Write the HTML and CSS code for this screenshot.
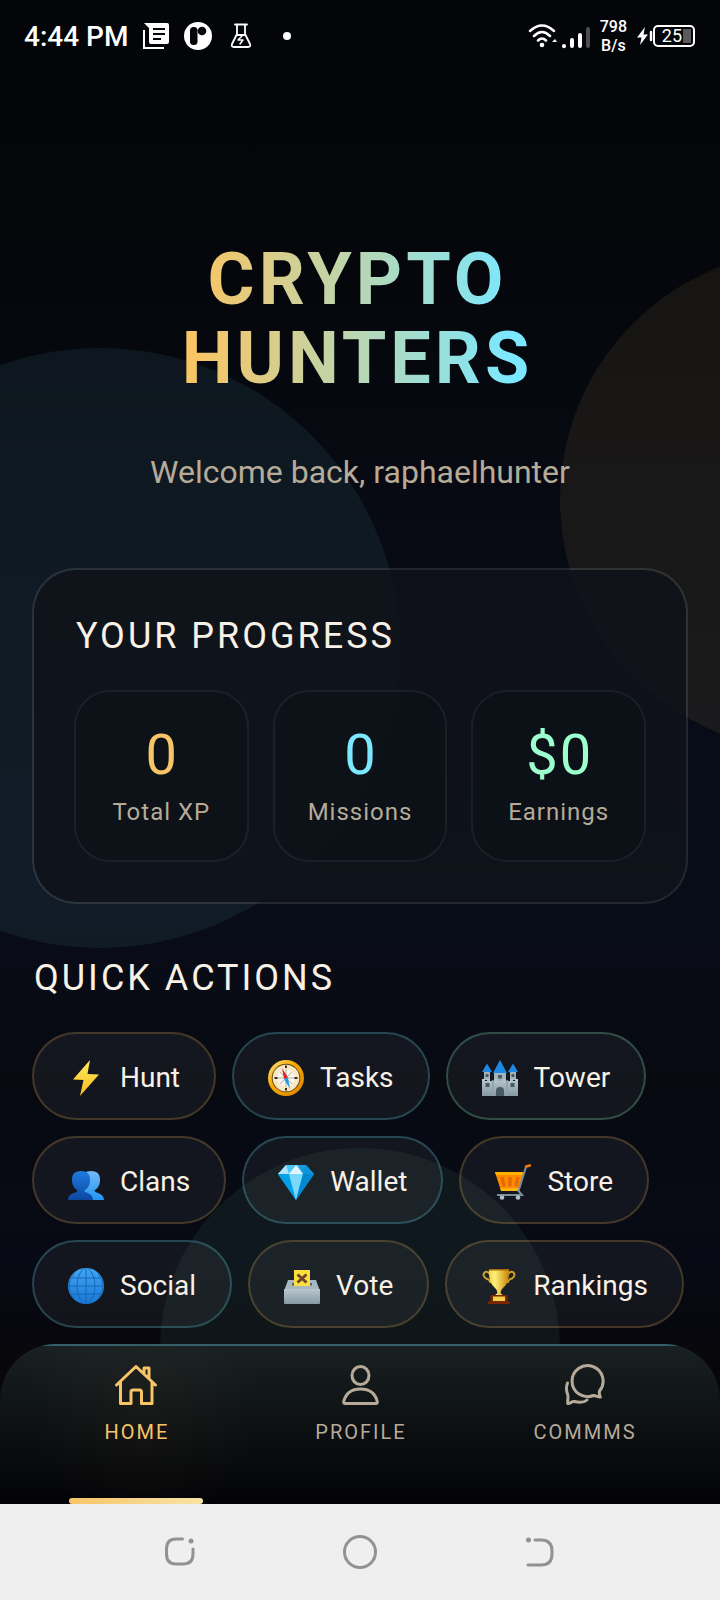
FILE: index.html
```html
<!DOCTYPE html>
<html lang="en">
<head>
<meta charset="utf-8">
<meta name="viewport" content="width=device-width, initial-scale=1">
<title>Crypto Hunters</title>
<link rel="stylesheet" href="styles.css">
</head>
<body>
<svg width="0" height="0" class="defs" aria-hidden="true">
  <defs>
    <linearGradient id="yellow" x2="0" y2="1"><stop stop-color="#ffee58"/><stop offset="1" stop-color="#f9b825"/></linearGradient>
    <linearGradient id="person" x2="0" y2="1"><stop stop-color="#1e7ce0"/><stop offset="1" stop-color="#0d47a1"/></linearGradient>
    <linearGradient id="person-back" x2="0" y2="1"><stop stop-color="#74b9f7"/><stop offset="1" stop-color="#2196f3"/></linearGradient>
    <linearGradient id="stone" x2="0" y2="1"><stop stop-color="#b9c7cf"/><stop offset="1" stop-color="#8699a3"/></linearGradient>
    <linearGradient id="globe" x2="0" y2="1"><stop stop-color="#42a5f5"/><stop offset="1" stop-color="#1976d2"/></linearGradient>
    <linearGradient id="rim" x2="1" y2="1"><stop stop-color="#ffe58a"/><stop offset=".4" stop-color="#f9ab00"/><stop offset="1" stop-color="#d98200"/></linearGradient>
    <linearGradient id="cup"><stop stop-color="#f5d04a"/><stop offset=".3" stop-color="#fff07a"/><stop offset="1" stop-color="#c98300"/></linearGradient>
  </defs>
</svg>
<div class="app">
  <div class="orb orb-blue"></div>
  <div class="orb orb-gold"></div>
  <div class="orb orb-green"></div>

  <header class="status">
    <div class="status-group status-left">
      <span class="clock">4:44 PM</span>
      <svg width="26" height="28" viewBox="0 0 26 28"><path fill="#fff" d="M1 1h23a2 2 0 0 1 2 2v17a2 2 0 0 1-2 2H8a2 2 0 0 1-2-2V6z"/><path fill="none" stroke="#fff" stroke-width="2" d="M1 8v18h20"/><path stroke="#04060a" stroke-width="2" d="M10 7h12M10 12h12M10 17h8"/></svg>
      <svg width="28" height="28" viewBox="0 0 28 28"><circle cx="14" cy="14" r="14" fill="#fff"/><rect x="6" y="5" width="7.500" height="18" rx="3.500" fill="#04060a"/><circle cx="18" cy="9" r="4.300" fill="#04060a"/></svg>
      <svg width="28" height="28" viewBox="-3 0 28 28" fill="none" stroke="#fff" stroke-width="1.800" stroke-linejoin="round" stroke-linecap="round"><path d="M5 2.500h12M7 3v9L2 22q-1 3 2 3h14q3 0 2-3l-5-10V3M7 13h8"/><path d="M12 14l-4 4h5l-3 4" stroke-width="1.500"/></svg>
      <span class="dot"></span>
    </div>
    <div class="status-group status-right">
      <svg width="62" height="28" viewBox="0 0 62 28" fill="none" stroke="#fff" stroke-width="2.500" stroke-linecap="round"><path d="M2 9q12-11 24 0M6 14q8-8 16 0M10 18.500q4-4 8 0"/><circle cx="14" cy="23" r="2.300" fill="#fff" stroke="none"/><path d="M24 20l3-3 2 3z" fill="#fff" stroke="none"/><path stroke-width="4" d="M36 24v.2M44 18v6M52 13v11"/><path stroke="#4d4d4f" stroke-width="4" d="M60 7v17"/></svg>
      <span class="speed">798<br>B/s</span>
      <span class="battery">
        <svg width="16" height="22" viewBox="0 0 16 22"><path fill="#fff" d="M8 2L0 12.500h4.500L3 20l8-10.500H6.500z"/><path stroke="#fff" stroke-width="2.500" stroke-linecap="round" d="M14 7v8"/></svg>
        <span class="battery-body">25<i class="battery-rest"></i></span>
      </span>
    </div>
  </header>

  <main class="content">
    <h1 class="title">CRYPTO<br>HUNTERS</h1>
    <p class="welcome">Welcome back, raphaelhunter</p>

    <section class="card">
      <h2 class="heading">YOUR PROGRESS</h2>
      <div class="stats">
        <div class="stat"><strong class="value gold">0</strong><span class="label">Total XP</span></div>
        <div class="stat"><strong class="value cyan">0</strong><span class="label">Missions</span></div>
        <div class="stat"><strong class="value mint">$0</strong><span class="label">Earnings</span></div>
      </div>
    </section>

    <section class="quick">
      <h2 class="heading">QUICK ACTIONS</h2>
      <div class="actions">
        <button class="pill">
          <svg class="emoji" viewBox="0 0 36 36"><path fill="url(#yellow)" d="M22 0L5 19.500l10.500.5L12 36 31 14.500l-11.500-.5z"/></svg>
          Hunt
        </button>
        <button class="pill pill-cyan">
          <svg class="emoji" viewBox="0 0 36 36"><circle cx="18" cy="18" r="18" fill="url(#rim)"/><circle cx="18" cy="18" r="14.300" fill="#6b4a12"/><circle cx="18" cy="18" r="13.300" fill="#f8e8c4"/><circle cx="18" cy="18" r="9" fill="#fbf6ea"/><path stroke="#a5a095" stroke-width=".8" d="M12 12l12 12M24 12L12 24M9 18h18M18 9v18"/><path stroke="#3b2e1a" stroke-width="2" d="M18 5.500v2.500M18 28v2.500M6.500 18h3M26.500 18h3"/><path fill="#e02020" d="M14 8l6 9.500-4 1.300z"/><path fill="#1e9be8" d="M22 29l-6-10 4-1.300z"/></svg>
          Tasks
        </button>
        <button class="pill pill-mint">
          <svg class="emoji" viewBox="0 0 36 36"><path fill="#a3b4be" d="M2 12h6v8H2zM28 12h6v8h-6zM12 13h12v8H12z"/><path fill="url(#stone)" d="M0 19h3v2h2v-2h3v2h4v-2h3v2h6v-2h3v2h4v-2h3v2h2v-2h3v17H0z"/><path fill="#8ea0ab" d="M10 20h1.500v16H10zM24.500 20H26v16h-1.500z"/><path fill="#1e88e5" d="M5 3.500l5 8.500H0zM31 3.500l5 8.500H26zM18 0l7 13H11z"/><path fill="#455a64" d="M3.500 14h3v3h-3zM29.500 14h3v3h-3zM16 15h4v3.500h-4zM3.500 23h4v4h-4zM28.500 23h4v4h-4zM14 36v-5q0-4 4-4t4 4v5z"/></svg>
          Tower
        </button>
        <button class="pill">
          <svg class="emoji" viewBox="0 0 36 36"><path fill="url(#person-back)" d="M23 7c7 0 9.500 4 9 10-.4 5-3 8-5.500 9.500 0 3 9.500 2 9.500 9.500H16V9q3-2 7-2z"/><path fill="url(#person)" d="M13 7c7 0 9.500 4 9 10-.4 5-3 8-5.500 9.500 0 3 8.500 2 8.500 9.500H0c0-7.500 9.500-6.500 9.500-9.500C7 25 4.400 22 4 17c-.5-6 2-10 9-10z"/></svg>
          Clans
        </button>
        <button class="pill pill-cyan">
          <svg class="emoji" viewBox="0 0 36 36"><path fill="#29b6f6" d="M8 1h20l8 9-18 26L0 10z"/><path fill="#b3e5fc" d="M8 1h10l-7 9H0z"/><path fill="#4fc3f7" d="M8 1h20l-3 9H11z"/><path fill="#e1f5fe" d="M18 1l7 9H11z"/><path fill="#0288d1" d="M28 1l8 9H25L20 1z" opacity=".7"/><path fill="#03a0ea" d="M0 10h11l7 26z"/><path fill="#7ad8fb" d="M11 10h14l-7 26z"/><path fill="#0288d1" d="M25 10h11L18 36z"/></svg>
          Wallet
        </button>
        <button class="pill">
          <svg class="emoji" viewBox="0 0 36 36"><path fill="#fb8c00" d="M0 8h29l-5 19H6z"/><path fill="#ffb300" d="M0 8h29l-.7 3H1zM5.500 24h19l-.8 3H6z"/><path stroke="#e56a00" stroke-width="3.500" d="M7 13l2 9.500M15 13v9.500M23 13l-2 9.500"/><path fill="none" stroke="#78909c" stroke-width="2" d="M31 3l-7.500 24 3.500 4H2"/><path stroke="#f57c00" stroke-width="2.500" stroke-linecap="round" d="M31 2.500l4-1"/><circle cx="7" cy="33.500" r="2.300" fill="#b0bec5"/><circle cx="23" cy="33.500" r="2.300" fill="#b0bec5"/></svg>
          Store
        </button>
        <button class="pill pill-cyan">
          <svg class="emoji" viewBox="0 0 36 36"><circle cx="18" cy="18" r="18" fill="url(#globe)"/><path fill="none" stroke="#1769b8" d="M18 0v36M0 18h36M4 10h28M4 26h28M16 0Q9 7 9 18t7 18M20 0q7 7 7 18t-7 18M6 5Q1 12 1 18t5 13M30 5q5 7 5 13t-5 13"/></svg>
          Social
        </button>
        <button class="pill">
          <svg class="emoji" viewBox="0 0 36 36"><path fill="#a9b8c0" d="M4 12h28l4 11H0z"/><path fill="url(#stone)" d="M0 21h36v14q0 1-1 1H1q-1 0-1-1z"/><path fill="#546570" d="M8 15h20v2.500H8z"/><path fill="#fdde3a" d="M10 2h16v16H10z"/><path stroke="#6d4430" stroke-width="3" d="M13.500 6.500l9 8M22.500 6.500l-9 8"/></svg>
          Vote
        </button>
        <button class="pill">
          <svg class="emoji" viewBox="0 0 36 36"><path fill="none" stroke="#cf9f2a" stroke-width="2" d="M9 6Q6 2.500 3.500 4.500q-2.500 3 1.500 6 4 1 4.500 4.500M27 6q3-3.500 5.500-1.500 2.500 3-1.500 6-4 1-4.500 4.500"/><path fill="url(#cup)" d="M8 1h20q1 14-6 19-2.500 2-2.500 5l3.500 3H13l3.500-3q0-3-2.500-5Q7 15 8 1z"/><path fill="#a66a00" d="M8 1h20v1.500H8z"/><path fill="#7a2600" d="M9.500 27h17v6.500H29V36H7v-2.500h2.500z"/><path fill="#f3cf48" d="M12 28.500h12v4.500H12z"/></svg>
          Rankings
        </button>
      </div>
    </section>
  </main>

  <nav class="tabs">
    <a class="tab tab-active" href="#home">
      <svg class="tab-icon" viewBox="0 0 44 44"><path d="M2.500 22L22 3.500 41.500 22M6.500 19v21.500H17V29q0-2 2-2h6.500q2 0 2 2v11.500H38V19M30 10.500V5h5v10.500"/></svg>
      HOME
    </a>
    <a class="tab" href="#profile">
      <svg class="tab-icon" viewBox="0 0 44 44"><ellipse cx="22.500" cy="12.500" rx="8.500" ry="9"/><path d="M7 40.500q-1.500 0-1.300-2C8 29.500 14.500 26 22.500 26s14.500 3.500 16.800 12.500q.2 2-1.300 2z"/></svg>
      PROFILE
    </a>
    <a class="tab" href="#commms">
      <svg class="tab-icon" viewBox="0 0 44 44"><path d="M37.500 28c-.5 1.500 0 4 .8 6-2 .8-4-1.700-7-1.500a15.500 15.500 0 1 1 6.200-4.500zM5.500 20c-2 5-1.300 8 .3 12 .7 3-.5 5 0 8.500 3 .3 3.500-2.500 6.500-2 5 1.200 10 1 12.700-1.500"/></svg>
      COMMMS
    </a>
  </nav>
</div>

<footer class="system">
  <button class="system-key" aria-label="Recent apps"><svg width="32" height="32" viewBox="0 0 32 32"><path d="M18.500 3H12Q2.500 3 2.500 13v5q0 10 9.500 10h7q10 0 10-10v-5"/><circle class="fill" cx="27" cy="5" r="2.500"/></svg></button>
  <button class="system-key" aria-label="Home"><svg width="36" height="36" viewBox="0 0 36 36"><circle cx="18" cy="18" r="15.500"/></svg></button>
  <button class="system-key" aria-label="Back"><svg width="32" height="32" viewBox="0 0 32 32"><path d="M11 4h6q11 0 11 11v3q0 11-11 11H4"/><circle class="fill" cx="4.500" cy="4" r="2.500"/></svg></button>
</footer>
</body>
</html>
```
FILE: styles.css
```css
* { box-sizing: border-box; margin: 0; padding: 0; }

body {
  min-height: 100vh;
  display: flex;
  flex-direction: column;
  font-family: Roboto, "Noto Sans", sans-serif;
  color: #f8f1e5;
  background: #050509;
}
.defs { position: absolute; }

.app {
  position: relative;
  flex: 1;
  display: flex;
  flex-direction: column;
  overflow: hidden;
  background: linear-gradient(#030508 0%, #04060a 15%, #070a12 33%, #090d18 58%, #080a12 72%, #070a14 84%, #070609 92%, #040406 100%);
}

.orb { position: absolute; border-radius: 50%; }
.orb-blue { width: 600px; height: 600px; left: -200px; top: 348px; background: rgba(123, 232, 255, .07); }
.orb-gold { width: 500px; height: 500px; right: -340px; top: 250px; background: rgba(247, 197, 102, .08); }
.orb-green { width: 400px; height: 400px; left: calc(50% - 200px); top: 1148px; background: rgba(155, 255, 206, .06); }

.status {
  position: relative;
  display: flex;
  justify-content: space-between;
  align-items: center;
  height: 72px;
  padding: 0 25px 0 24px;
  color: #fff;
}
.status-group { display: flex; align-items: center; }
.status-left { gap: 15px; }
.status-right { gap: 10px; }
.clock { font-size: 28px; font-weight: 500; }
.dot { width: 8px; height: 8px; border-radius: 50%; background: #fff; margin-left: 13px; }
.speed { font-size: 16px; line-height: 19px; font-weight: 500; text-align: center; }
.battery { display: flex; align-items: center; }
.battery-body {
  display: flex;
  align-items: center;
  justify-content: flex-end;
  gap: 1px;
  width: 42px;
  height: 22px;
  padding: 0 2px;
  border: 2px solid #fff;
  border-radius: 5px;
  font-size: 18px;
  line-height: 18px;
}
.battery-rest { width: 8px; height: 14px; background: #5a5a5c; }

.content {
  position: relative;
  flex: 1;
  padding: 168px 32px 0;
}
.title {
  width: fit-content;
  margin: 0 auto;
  padding-right: 5px;
  font-size: 72px;
  line-height: 79px;
  font-weight: 700;
  letter-spacing: 4px;
  text-align: center;
  color: transparent;
  background: linear-gradient(90deg, #f7c566 5%, #7be8ff 93%);
  background-clip: text;
  -webkit-background-clip: text;
}
.welcome {
  margin-top: 54px;
  font-size: 32px;
  line-height: 40px;
  text-align: center;
  color: #b6ab99;
}
.heading {
  padding-left: 2px;
  font-size: 36px;
  line-height: 48px;
  font-weight: 400;
  letter-spacing: 3px;
}
.card {
  margin-top: 76px;
  padding: 42px 40px 40px;
  border: 2px solid rgba(255, 255, 255, .11);
  border-radius: 44px;
  background: rgba(15, 18, 26, .92);
  background-clip: padding-box;
}
.stats {
  display: grid;
  grid-template-columns: repeat(3, 1fr);
  gap: 24px;
  margin-top: 30px;
}
.stat {
  display: flex;
  flex-direction: column;
  align-items: center;
  padding: 30px 0 32px;
  border: 2px solid rgba(255, 255, 255, .06);
  border-radius: 36px;
  background: rgba(11, 14, 21, .4);
  background-clip: padding-box;
}
.value { padding-left: 2px; font-size: 56px; line-height: 66px; font-weight: 400; letter-spacing: 2px; }
.gold { color: #f7c566; }
.cyan { color: #7be8ff; }
.mint { color: #9bffce; }
.label { margin-top: 8px; font-size: 24px; line-height: 32px; letter-spacing: 1px; color: #b6ab99; }

.quick { margin-top: 50px; }
.actions { display: flex; flex-wrap: wrap; gap: 16px; margin-top: 30px; }
.pill {
  display: flex;
  align-items: center;
  gap: 16px;
  height: 88px;
  padding: 3px 34px 0;
  border: 2px solid rgba(247, 197, 102, .25);
  border-radius: 44px;
  background: rgba(255, 255, 255, .05);
  background-clip: padding-box;
  font-family: inherit;
  font-size: 28px;
  color: inherit;
}
.pill-cyan { border-color: rgba(123, 232, 255, .27); }
.pill-mint { border-color: rgba(155, 255, 206, .27); }
.emoji { width: 36px; height: 36px; }

.tabs {
  position: relative;
  display: grid;
  grid-template-columns: repeat(3, 1fr);
  height: 160px;
  padding: 0 24px;
  border-radius: 56px 56px 0 0;
  background:
    linear-gradient(#365f6a, #365f6a) top / 100% 2px no-repeat,
    radial-gradient(circle at 20% 40%, rgba(247, 197, 102, .04), transparent 120px),
    linear-gradient(#1a2123, #101517 35%, #090b0d 70%, #030306);
}
.tab {
  position: relative;
  display: flex;
  flex-direction: column;
  align-items: center;
  gap: 11px;
  padding-top: 19px;
  font-size: 20px;
  line-height: 28px;
  letter-spacing: 2px;
  text-indent: 2px;
  text-decoration: none;
  color: #b6ab99;
}
.tab-active { color: #f7c566; }
.tab-active::after {
  content: "";
  position: absolute;
  left: 20%;
  right: 20%;
  bottom: 0;
  height: 6px;
  border-radius: 3px;
  background: linear-gradient(90deg, #f7c566, #f9e3a8);
}
.tab-icon {
  width: 44px;
  height: 44px;
  fill: none;
  stroke: currentColor;
  stroke-width: 3;
  stroke-linecap: round;
  stroke-linejoin: round;
}

.system {
  display: flex;
  justify-content: center;
  align-items: center;
  gap: 146px;
  height: 96px;
  background: #efefef;
}
.system-key { display: flex; border: 0; background: none; }
.system-key svg { fill: none; stroke: #929292; stroke-width: 3; stroke-linecap: round; }
.system-key .fill { fill: #929292; stroke: none; }
```
